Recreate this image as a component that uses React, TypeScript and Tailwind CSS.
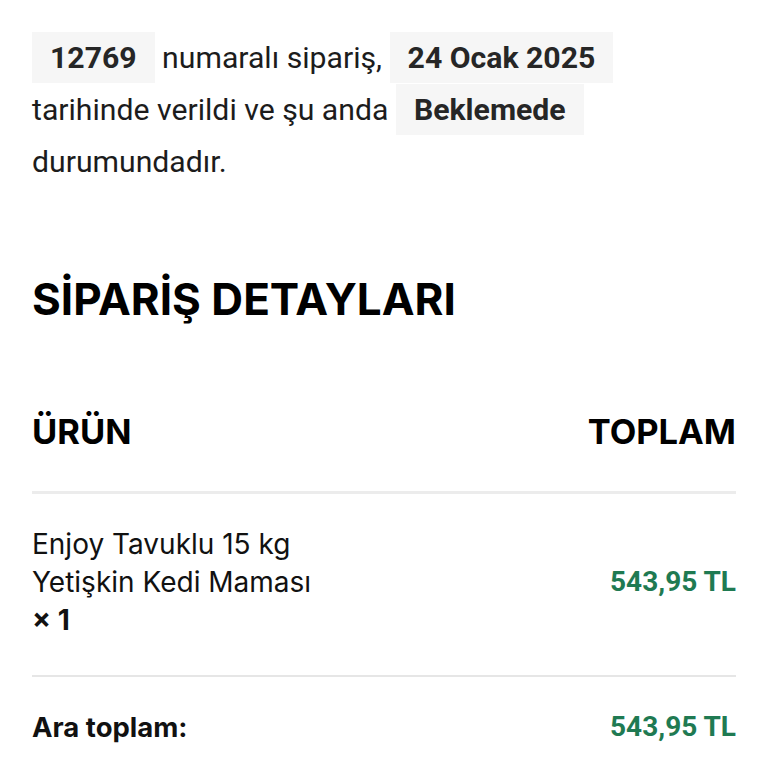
export default function App() {
  return (
    <div className="min-h-screen bg-white px-8 pt-8 text-[#111]">
      <p className="max-w-[690px] font-['Roboto',sans-serif] text-[30.2px] leading-[52px] text-[#1c1c1c]">
        <mark className="bg-[#f6f6f6] px-[18px] py-[8px] font-bold text-[#262626]">12769</mark> numaralı sipariş,{' '}
        <mark className="bg-[#f6f6f6] px-[18px] py-[8px] font-bold text-[#262626]">24 Ocak 2025</mark> tarihinde verildi ve şu anda{' '}
        <mark className="bg-[#f6f6f6] px-[18px] py-[8px] font-bold text-[#262626]">Beklemede</mark> durumundadır.
      </p>

      <h2 className="mt-[89px] font-['Inter',sans-serif] text-[44px] font-bold leading-[44px] text-black">
        SİPARİŞ DETAYLARI
      </h2>

      <div className="mt-[94px] font-['Inter',sans-serif]">
        <div className="flex items-center justify-between border-b-[3px] border-[#ececec] pb-[42px] text-[34.5px] font-bold leading-[34px] text-black">
          <span>ÜRÜN</span>
          <span>TOPLAM</span>
        </div>
        <div className="flex items-center justify-between border-b-2 border-[#e6e6e6] pt-[31px] pb-[36px]">
          <div className="text-[28px] leading-[38px] text-[#111]">
            Enjoy Tavuklu 15 kg<br />Yetişkin Kedi Maması<br /><span className="font-bold">× 1</span>
          </div>
          <span className="font-['Roboto',sans-serif] text-[28px] font-bold text-[#1f7a52]">543,95 TL</span>
        </div>
        <div className="flex items-center justify-between pt-[31px] text-[27.5px] font-bold leading-[38px]">
          <span>Ara toplam:</span>
          <span className="font-['Roboto',sans-serif] text-[28px] text-[#1f7a52]">543,95 TL</span>
        </div>
      </div>
    </div>
  );
}
